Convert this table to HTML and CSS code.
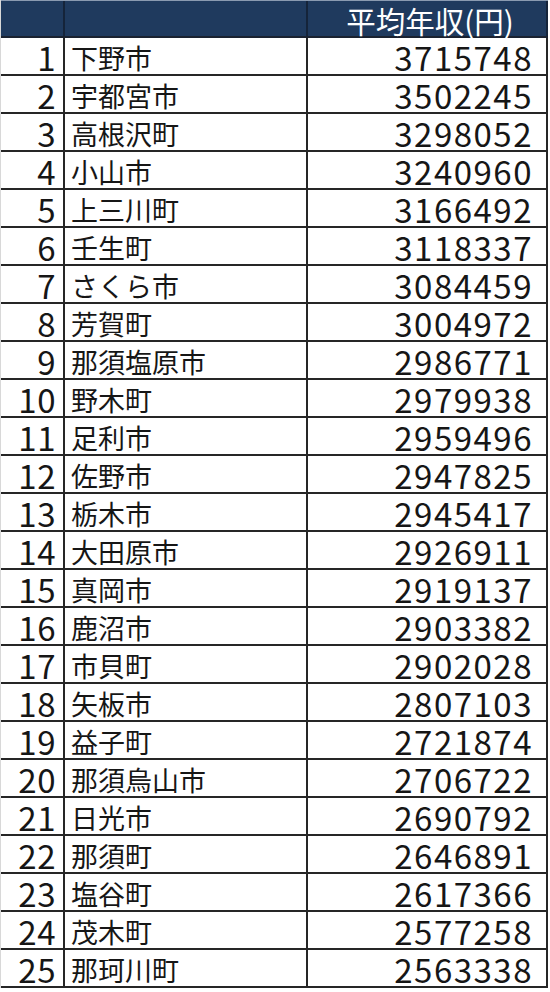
FILE: index.html
```html
<!DOCTYPE html>
<html lang="ja">
<head>
<meta charset="utf-8">
<link rel="stylesheet" href="styles.css">
</head>
<body>
<div class="sheet">
  <div class="row head">
    <div class="c rank"></div>
    <div class="c name"></div>
    <div class="c val">平均年収(円)</div>
  </div>
  <div class="row"><div class="c rank">1</div><div class="c name">下野市</div><div class="c val">3715748</div></div>
  <div class="row"><div class="c rank">2</div><div class="c name">宇都宮市</div><div class="c val">3502245</div></div>
  <div class="row"><div class="c rank">3</div><div class="c name">高根沢町</div><div class="c val">3298052</div></div>
  <div class="row"><div class="c rank">4</div><div class="c name">小山市</div><div class="c val">3240960</div></div>
  <div class="row"><div class="c rank">5</div><div class="c name">上三川町</div><div class="c val">3166492</div></div>
  <div class="row"><div class="c rank">6</div><div class="c name">壬生町</div><div class="c val">3118337</div></div>
  <div class="row"><div class="c rank">7</div><div class="c name">さくら市</div><div class="c val">3084459</div></div>
  <div class="row"><div class="c rank">8</div><div class="c name">芳賀町</div><div class="c val">3004972</div></div>
  <div class="row"><div class="c rank">9</div><div class="c name">那須塩原市</div><div class="c val">2986771</div></div>
  <div class="row"><div class="c rank">10</div><div class="c name">野木町</div><div class="c val">2979938</div></div>
  <div class="row"><div class="c rank">11</div><div class="c name">足利市</div><div class="c val">2959496</div></div>
  <div class="row"><div class="c rank">12</div><div class="c name">佐野市</div><div class="c val">2947825</div></div>
  <div class="row"><div class="c rank">13</div><div class="c name">栃木市</div><div class="c val">2945417</div></div>
  <div class="row"><div class="c rank">14</div><div class="c name">大田原市</div><div class="c val">2926911</div></div>
  <div class="row"><div class="c rank">15</div><div class="c name">真岡市</div><div class="c val">2919137</div></div>
  <div class="row"><div class="c rank">16</div><div class="c name">鹿沼市</div><div class="c val">2903382</div></div>
  <div class="row"><div class="c rank">17</div><div class="c name">市貝町</div><div class="c val">2902028</div></div>
  <div class="row"><div class="c rank">18</div><div class="c name">矢板市</div><div class="c val">2807103</div></div>
  <div class="row"><div class="c rank">19</div><div class="c name">益子町</div><div class="c val">2721874</div></div>
  <div class="row"><div class="c rank">20</div><div class="c name">那須烏山市</div><div class="c val">2706722</div></div>
  <div class="row"><div class="c rank">21</div><div class="c name">日光市</div><div class="c val">2690792</div></div>
  <div class="row"><div class="c rank">22</div><div class="c name">那須町</div><div class="c val">2646891</div></div>
  <div class="row"><div class="c rank">23</div><div class="c name">塩谷町</div><div class="c val">2617366</div></div>
  <div class="row"><div class="c rank">24</div><div class="c name">茂木町</div><div class="c val">2577258</div></div>
  <div class="row"><div class="c rank">25</div><div class="c name">那珂川町</div><div class="c val">2563338</div></div>
</div>
</body>
</html>
```

FILE: styles.css
```css
html, body {
  margin: 0;
  padding: 0;
  background: #ffffff;
}

.sheet {
  width: 548px;
  border-left: 1px solid #d8d8d8;
  box-sizing: border-box;
  font-family: "Noto Sans CJK JP", "Noto Sans", sans-serif;
  color: #161616;
}

.row {
  display: grid;
  grid-template-columns: 64px 243px 240px;
  height: 38px;
  border-bottom: 2px solid #262626;
  box-sizing: border-box;
}

.c {
  display: flex;
  align-items: flex-end;
  border-right: 2px solid #262626;
  box-sizing: border-box;
  line-height: 1;
  white-space: nowrap;
}

.rank {
  justify-content: flex-end;
  padding-right: 7px;
  font-size: 33px;
  letter-spacing: 0.5px;
}

.name {
  justify-content: flex-start;
  padding-left: 6px;
  padding-bottom: 3px;
  font-size: 27px;
}

.val {
  justify-content: flex-end;
  padding-right: 13px;
  font-size: 33px;
  letter-spacing: 1.5px;
}

.head {
  background: #1f3a5e;
  border-top: 1px solid #8a9ab0;
  border-bottom: 2px solid #1a2230;
}

.head .c {
  border-right-color: #15243a;
}

.head .val {
  color: #ffffff;
  justify-content: center;
  padding-right: 0;
  padding-left: 6px;
  padding-bottom: 1px;
  font-size: 29.5px;
  letter-spacing: 0;
}
```
